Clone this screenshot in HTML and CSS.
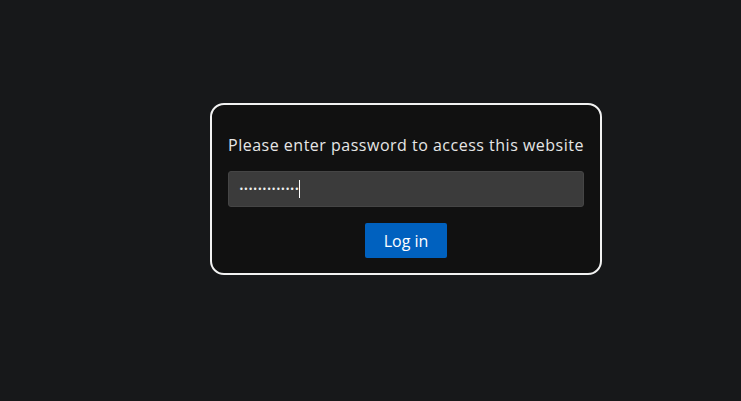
FILE: index.html
```html
<!DOCTYPE html>
<html lang="en">
<head>
    <meta charset="UTF-8">
    <title>Protected</title>
    <link rel="stylesheet" href="styles.css">
</head>
<body>

  <div class="gate">
    <p class="gate-msg">Please enter password to access this website</p>
    <div class="pw-field">
      <span class="pw-dots">•••••••••••••</span><span class="caret"></span>
    </div>
    <button class="login-btn">Log in</button>
  </div>

</body>
</html>
```

FILE: styles.css
```css
body {
    margin: 0;
    background-color: #17181a;
    font-family: "Open Sans", Arial, sans-serif;
}

.gate {
    margin: 103px 0 0 210px;
    width: 356px;
    padding: 30px 16px 15px;
    background-color: #111111;
    border: 2px solid #f2f2f2;
    border-radius: 14px;
    display: flex;
    flex-direction: column;
    align-items: center;
}

.gate-msg {
    margin: 0 0 16px;
    color: #e6e6e6;
    font-size: 16px;
    letter-spacing: 0.5px;
    line-height: 20px;
    white-space: nowrap;
}

.pw-field {
    width: 100%;
    box-sizing: border-box;
    height: 36px;
    background-color: #3b3b3b;
    border: 1px solid #454545;
    border-radius: 3px;
    padding: 0 10px;
    display: flex;
    align-items: center;
}

.pw-dots {
    color: #f0f0f0;
    font-family: "DejaVu Sans", sans-serif;
    font-size: 8px;
    letter-spacing: -0.1px;
}

.caret {
    width: 1px;
    height: 18px;
    background-color: #ffffff;
}

.login-btn {
    margin-top: 16px;
    width: 82px;
    height: 35px;
    background-color: #0061bf;
    color: #ffffff;
    border: none;
    border-radius: 2px;
    font-family: "Open Sans", Arial, sans-serif;
    font-size: 16px;
    cursor: pointer;
}
```
